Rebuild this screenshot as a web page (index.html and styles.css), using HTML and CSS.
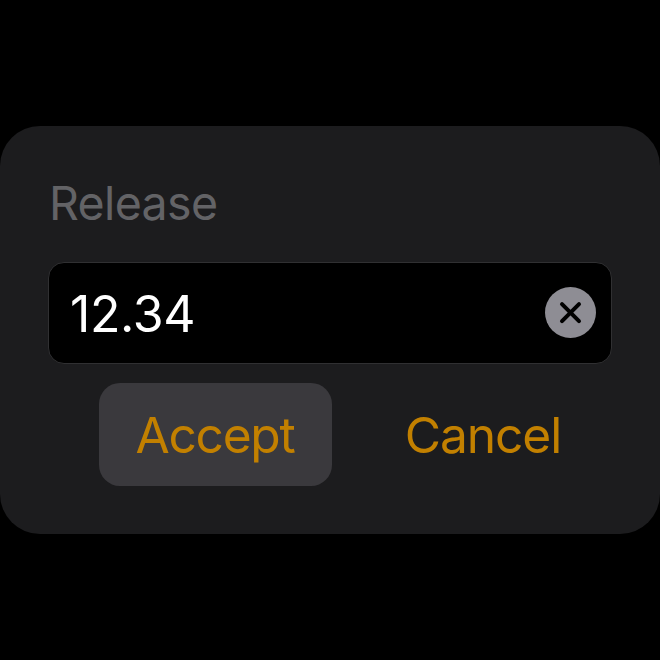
FILE: index.html
```html
<!DOCTYPE html>
<html lang="en">
<head>
<meta charset="utf-8">
<title>Release</title>
<link rel="stylesheet" href="styles.css">
</head>
<body>
<main class="card">
  <div class="label">Release</div>
  <div class="field">
    <span class="value">12.34</span>
    <svg class="clear" viewBox="0 0 51 51" aria-hidden="true"><circle cx="25.5" cy="25.5" r="25.5" fill="#8e8d94"/><path d="M17 17.1 34 34.1M34 17.1 17 34.1" stroke="#000" stroke-width="4" stroke-linecap="round"/></svg>
  </div>
  <div class="actions">
    <div class="button accept">Accept</div>
    <div class="button cancel">Cancel</div>
  </div>
</main>
</body>
</html>
```

FILE: styles.css
```css
* { box-sizing: border-box; }
body {
  margin: 0;
  height: 660px;
  padding-top: 126px;
  background: #000;
  font-family: Inter, "Liberation Sans", sans-serif;
  overflow: hidden;
}
.card {
  height: 408px;
  padding: 48px;
  border-radius: 40px;
  background: #1c1c1e;
}
.label {
  height: 88px;
  padding-left: 1px;
  line-height: 59px;
  font-size: 46.5px;
  letter-spacing: -0.65px;
  color: #636366;
}
.field {
  display: flex;
  align-items: center;
  justify-content: space-between;
  height: 102px;
  padding: 0 15px 0 21px;
  border: 1px solid #303032;
  border-radius: 16px;
  background: #000;
  color: #fff;
  font-size: 50px;
}
.value {
  padding-top: 1px;
  letter-spacing: -0.4px;
}
.clear { width: 51px; height: 51px; margin-bottom: 2px; }
.actions { display: flex; gap: 35px; padding: 19px 0 0 51px; }
.button {
  display: flex;
  align-items: center;
  justify-content: center;
  width: 233px;
  height: 103px;
  border-radius: 21px;
  color: #c28000;
  font-size: 49.7px;
}
.accept { background: #3a393d; letter-spacing: -1.3px; padding-right: 1px; }
.cancel { letter-spacing: -1.1px; padding-right: 1px; }
```
